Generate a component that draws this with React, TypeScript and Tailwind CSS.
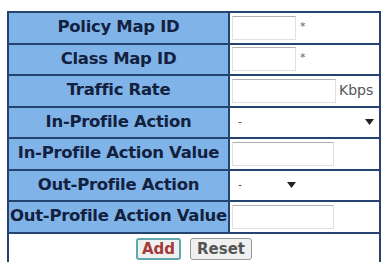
type Row = {
  label: string
  kind: 'input' | 'select'
  width: string
  suffix?: string
}

const rows: Row[] = [
  { label: 'Policy Map ID', kind: 'input', width: 'w-[64px]', suffix: '*' },
  { label: 'Class Map ID', kind: 'input', width: 'w-[64px]', suffix: '*' },
  { label: 'Traffic Rate', kind: 'input', width: 'w-[104px]', suffix: 'Kbps' },
  { label: 'In-Profile Action', kind: 'select', width: 'w-[146px]' },
  { label: 'In-Profile Action Value', kind: 'input', width: 'w-[102px]' },
  { label: 'Out-Profile Action', kind: 'select', width: 'w-[68px]' },
  { label: 'Out-Profile Action Value', kind: 'input', width: 'w-[102px]' }
]

const TextBox = ({ width }: { width: string }) => (
  <div className={`${width} h-[24px] border border-[#e0e0e0] border-t-[#b0b0b0] bg-white`} />
)

const SelectBox = ({ width }: { width: string }) => (
  <div className={`${width} flex h-[24px] items-center justify-between bg-white pl-1.5 pr-1 text-[11px] text-[#444]`}>
    <span>-</span>
    <svg width="9" height="6" viewBox="0 0 9 6">
      <path d="M0 0h9L4.5 6z" fill="#222" />
    </svg>
  </div>
)

export default function App() {
  return (
    <div className="h-[262px] w-[384px] overflow-hidden bg-white pl-[7px] pt-[11px] font-['DejaVu_Sans',Verdana,sans-serif]">
      <table className="w-[374px] border-collapse border-2 border-[#24436f]">
        <tbody>
          {rows.map((row) => (
            <tr key={row.label} className="h-[31.5px]">
              <td className="w-[221px] whitespace-nowrap border-2 border-[#24436f] bg-[#80b4e8] p-0 text-center text-[16.5px] font-bold tracking-[-0.3px] text-[#13213f]">
                {row.label}
              </td>
              <td className="border-2 border-[#24436f] p-0 pl-[2px]">
                <div className="flex items-center">
                  {row.kind === 'input' ? <TextBox width={row.width} /> : <SelectBox width={row.width} />}
                  {row.suffix === '*' && <span className="ml-1 self-start pt-[3px] text-[11px] text-[#666]">*</span>}
                  {row.suffix === 'Kbps' && (
                    <span className="ml-[3px] font-['DejaVu_Sans',sans-serif] text-[14px] text-[#555]">Kbps</span>
                  )}
                </div>
              </td>
            </tr>
          ))}
          <tr className="h-[31px]">
            <td colSpan={2} className="border-2 border-[#24436f] p-0">
              <div className="flex items-center justify-center gap-[9px] pt-[2px]">
                <button className="h-[22px] rounded-[3px] border-2 border-[#5fa8b0] bg-[#f0f0f0] px-[4px] text-[15px] font-bold leading-none text-[#a33a3a]">
                  Add
                </button>
                <button className="h-[22px] rounded-[3px] border border-[#9a9a9a] bg-[#f0f0f0] px-[6px] text-[15px] font-bold leading-none text-[#555]">
                  Reset
                </button>
              </div>
            </td>
          </tr>
        </tbody>
      </table>
    </div>
  )
}
